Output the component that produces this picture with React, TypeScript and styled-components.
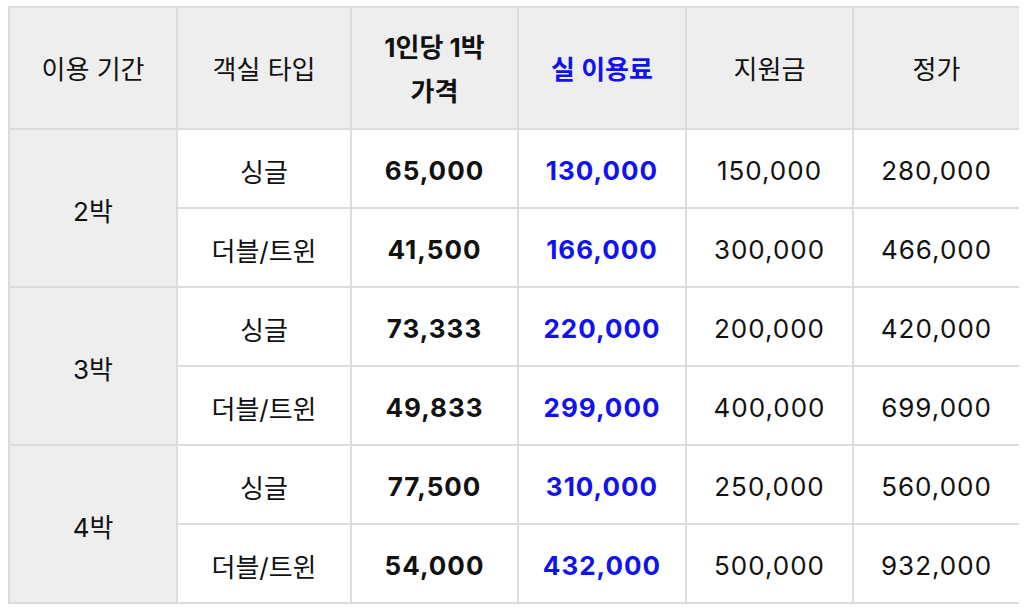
import styled, { createGlobalStyle } from "styled-components"

const GlobalStyle = createGlobalStyle`
  body {
    margin: 6px 7px 8px 8px;
    background: #fff;
    font-family: Inter, "Noto Sans CJK KR", "Noto Sans", sans-serif;
    color: #111;
  }
`

type Row = {
  type: string
  perNight: string
  actual: string
  support: string
  list: string
}

type Group = {
  period: string
  rows: Row[]
}

const groups: Group[] = [
  {
    period: "2박",
    rows: [
      { type: "싱글", perNight: "65,000", actual: "130,000", support: "150,000", list: "280,000" },
      { type: "더블/트윈", perNight: "41,500", actual: "166,000", support: "300,000", list: "466,000" },
    ],
  },
  {
    period: "3박",
    rows: [
      { type: "싱글", perNight: "73,333", actual: "220,000", support: "200,000", list: "420,000" },
      { type: "더블/트윈", perNight: "49,833", actual: "299,000", support: "400,000", list: "699,000" },
    ],
  },
  {
    period: "4박",
    rows: [
      { type: "싱글", perNight: "77,500", actual: "310,000", support: "250,000", list: "560,000" },
      { type: "더블/트윈", perNight: "54,000", actual: "432,000", support: "500,000", list: "932,000" },
    ],
  },
]

const Table = styled.table`
  width: 1011px;
  border-collapse: collapse;
  table-layout: fixed;
  border: 2px solid #dcdcdc;
`

const Col = styled.col<{ $w: number }>`
  width: ${({ $w }) => $w}px;
`

const Th = styled.th<{ $strong?: boolean; $accent?: boolean }>`
  box-sizing: border-box;
  height: 122px;
  padding: 3px 10px 0;
  background: #eeeeee;
  border: 2px solid #dcdcdc;
  font-size: 26px;
  line-height: 44px;
  font-weight: ${({ $strong }) => ($strong ? 700 : 400)};
  color: ${({ $accent }) => ($accent ? "#1212f0" : "#111")};
  text-align: center;
  vertical-align: middle;
`

const PeriodCell = styled.td`
  padding: 3px 0 0;
  background: #eeeeee;
  border: 2px solid #dcdcdc;
  font-size: 26px;
  text-align: center;
  vertical-align: middle;
`

const Td = styled.td<{ $strong?: boolean; $accent?: boolean; $num?: boolean }>`
  box-sizing: border-box;
  height: 79px;
  padding: 3px 0 0;
  border: 2px solid #dcdcdc;
  font-size: 26px;
  letter-spacing: ${({ $num }) => ($num ? "1px" : "0")};
  font-weight: ${({ $strong }) => ($strong ? 700 : 400)};
  color: ${({ $accent }) => ($accent ? "#1212f0" : "#111")};
  text-align: center;
  vertical-align: middle;
`

export default function App() {
  return (
    <>
      <GlobalStyle />
      <Table>
        <colgroup>
          <Col $w={168} />
          <Col $w={174} />
          <Col $w={167} />
          <Col $w={168} />
          <Col $w={167} />
          <Col $w={167} />
        </colgroup>
        <thead>
          <tr>
            <Th>이용 기간</Th>
            <Th>객실 타입</Th>
            <Th $strong>
              1인당 1박
              <br />
              가격
            </Th>
            <Th $strong $accent>실 이용료</Th>
            <Th>지원금</Th>
            <Th>정가</Th>
          </tr>
        </thead>
        <tbody>
          {groups.map((g) =>
            g.rows.map((r, i) => (
              <tr key={g.period + r.type}>
                {i === 0 && <PeriodCell rowSpan={g.rows.length}>{g.period}</PeriodCell>}
                <Td>{r.type}</Td>
                <Td $num $strong>{r.perNight}</Td>
                <Td $num $strong $accent>{r.actual}</Td>
                <Td $num>{r.support}</Td>
                <Td $num>{r.list}</Td>
              </tr>
            ))
          )}
        </tbody>
      </Table>
    </>
  )
}
